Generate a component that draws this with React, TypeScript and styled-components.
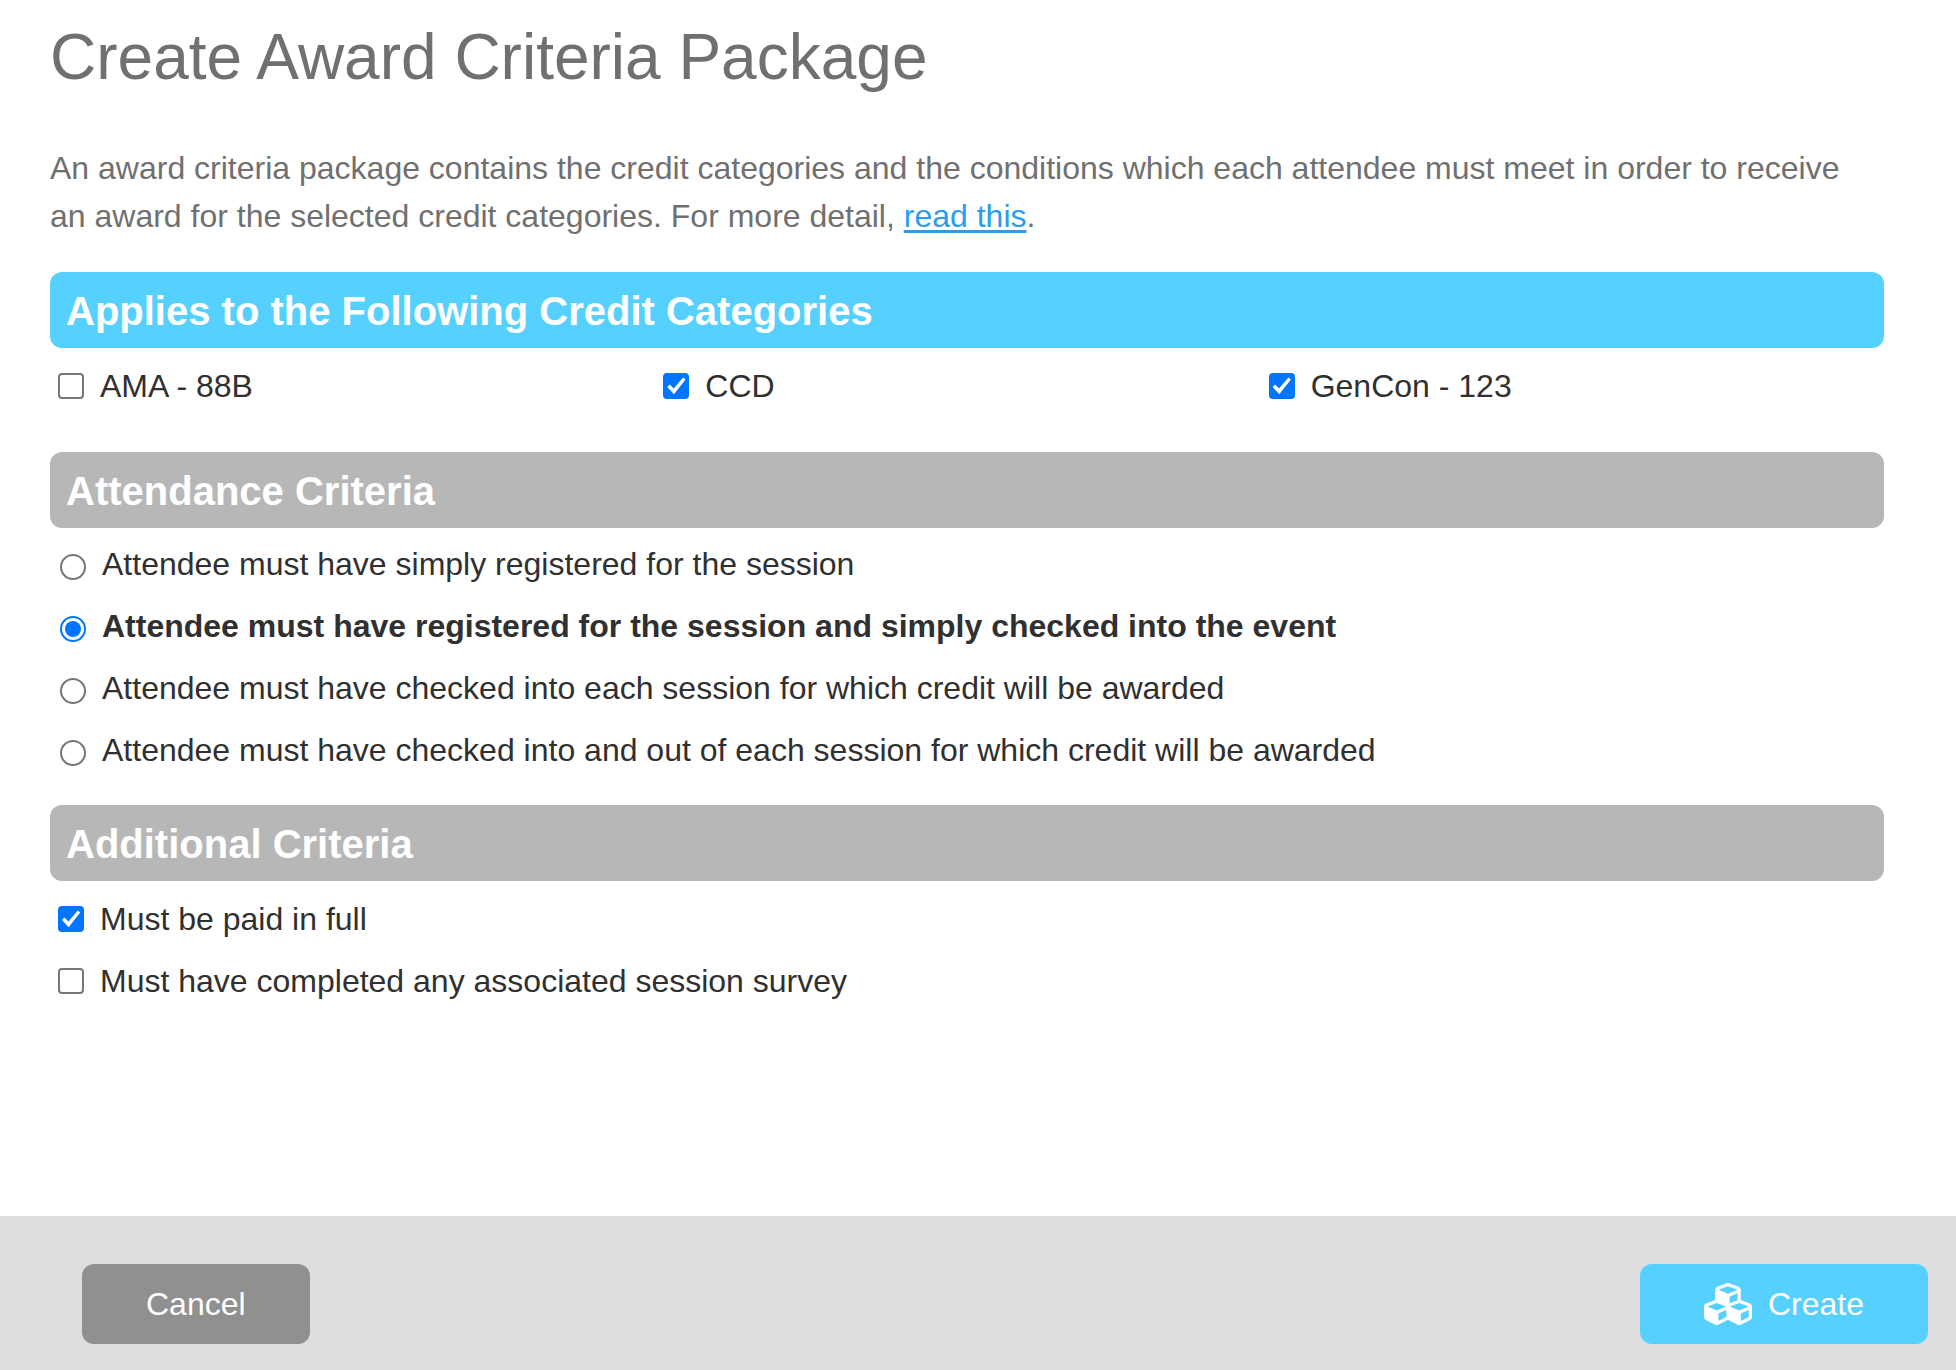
import React, { useState } from "react";
import styled, { createGlobalStyle, css } from "styled-components";
import { FaCubes } from "react-icons/fa";

const GlobalStyle = createGlobalStyle`
  *, *::before, *::after { box-sizing: border-box; }
  body {
    margin: 0;
    background: #ffffff;
    color: #303030;
    font-family: "Helvetica Neue", "Liberation Sans", Arial, sans-serif;
    font-size: 32px;
    line-height: 48px;
  }
`;

const Page = styled.div`
  display: flex;
  flex-direction: column;
  min-height: 100vh;
`;

const Content = styled.main`
  flex: 1;
  padding: 17px 72px 32px 50px;
`;

const Title = styled.h1`
  margin: 0 0 47px;
  color: #707070;
  font-size: 64px;
  font-weight: 400;
  line-height: 80px;
`;

const Intro = styled.p`
  margin: 0 0 32px;
  padding-right: 16px;
  color: #707070;
`;

const TextLink = styled.a`
  color: #2b9cee;
  text-decoration: underline;
  text-decoration-thickness: 3px;
  text-underline-offset: 3px;
`;

const Section = styled.section<{ $gapAfter: number }>`
  margin-bottom: ${(p) => p.$gapAfter}px;
`;

const SectionTitle = styled.h2<{ $active?: boolean }>`
  margin: 0;
  padding: 9px 16px 7px;
  border-radius: 12px;
  background: ${(p) => (p.$active ? "#55d0ff" : "#b7b7b7")};
  color: #ffffff;
  font-size: 40px;
  font-weight: 700;
  line-height: 60px;
`;

const CategoryGrid = styled.div`
  display: grid;
  grid-template-columns: repeat(3, 1fr);
  padding: 14px 10px 0 8px;
`;

const OptionList = styled.div<{ $radio?: boolean }>`
  display: flex;
  flex-direction: column;
  align-items: flex-start;
  gap: 14px;
  padding: ${(p) => (p.$radio ? "12px 10px 0" : "14px 8px 0")};
`;

const Option = styled.label<{ $bold?: boolean }>`
  display: flex;
  align-items: center;
  gap: 16px;
  font-weight: ${(p) => (p.$bold ? 700 : 400)};
`;

const control = css`
  appearance: none;
  flex: none;
  display: grid;
  place-items: center;
  width: 26px;
  height: 26px;
  margin: 0;
  border: 2px solid #767676;
  background: #ffffff;

  &:checked {
    border-color: #0075ff;
  }
`;

const CheckInput = styled.input.attrs({ type: "checkbox" })`
  ${control}
  border-radius: 4px;

  &:checked {
    background: #0075ff;
  }

  &:checked::before {
    content: "";
    width: 20px;
    height: 20px;
    background: #ffffff;
    clip-path: polygon(5% 55%, 17% 43%, 37% 63%, 84% 7%, 96% 18%, 38% 91%);
  }
`;

const RadioInput = styled.input.attrs({ type: "radio" })`
  ${control}
  margin-top: 6px;
  border-radius: 50%;

  &:checked::before {
    content: "";
    width: 16px;
    height: 16px;
    border-radius: 50%;
    background: #0075ff;
  }
`;

const Footer = styled.footer`
  display: flex;
  justify-content: space-between;
  padding: 48px 28px 26px 82px;
  background: #dedede;
`;

const Button = styled.button<{ $primary?: boolean }>`
  display: flex;
  align-items: center;
  gap: 16px;
  padding: 16px 64px;
  border: 0;
  border-radius: 12px;
  background: ${(p) => (p.$primary ? "#55d0ff" : "#909090")};
  color: #ffffff;
  font: inherit;
  cursor: pointer;
`;

const categories = ["AMA - 88B", "CCD", "GenCon - 123"];

const attendanceRules = [
  "Attendee must have simply registered for the session",
  "Attendee must have registered for the session and simply checked into the event",
  "Attendee must have checked into each session for which credit will be awarded",
  "Attendee must have checked into and out of each session for which credit will be awarded",
];

const extraRules = [
  "Must be paid in full",
  "Must have completed any associated session survey",
];

function CheckOption({ label, initial }: { label: string; initial: boolean }) {
  const [checked, setChecked] = useState(initial);
  return (
    <Option>
      <CheckInput checked={checked} onChange={(e) => setChecked(e.target.checked)} />
      {label}
    </Option>
  );
}

export default function App() {
  const [rule, setRule] = useState(1);

  return (
    <Page>
      <GlobalStyle />
      <Content>
        <Title>Create Award Criteria Package</Title>
        <Intro>
          An award criteria package contains the credit categories and the conditions which each
          attendee must meet in order to receive an award for the selected credit categories. For
          more detail, <TextLink href="#detail">read this</TextLink>.
        </Intro>

        <Section $gapAfter={42}>
          <SectionTitle $active>Applies to the Following Credit Categories</SectionTitle>
          <CategoryGrid>
            {categories.map((name, i) => (
              <CheckOption key={name} label={name} initial={i > 0} />
            ))}
          </CategoryGrid>
        </Section>

        <Section $gapAfter={31}>
          <SectionTitle>Attendance Criteria</SectionTitle>
          <OptionList $radio>
            {attendanceRules.map((text, i) => (
              <Option key={text} $bold={rule === i}>
                <RadioInput name="attendance" checked={rule === i} onChange={() => setRule(i)} />
                {text}
              </Option>
            ))}
          </OptionList>
        </Section>

        <Section $gapAfter={0}>
          <SectionTitle>Additional Criteria</SectionTitle>
          <OptionList>
            {extraRules.map((text, i) => (
              <CheckOption key={text} label={text} initial={i === 0} />
            ))}
          </OptionList>
        </Section>
      </Content>

      <Footer>
        <Button type="button">Cancel</Button>
        <Button type="button" $primary>
          <FaCubes size={48} aria-hidden />
          Create
        </Button>
      </Footer>
    </Page>
  );
}
